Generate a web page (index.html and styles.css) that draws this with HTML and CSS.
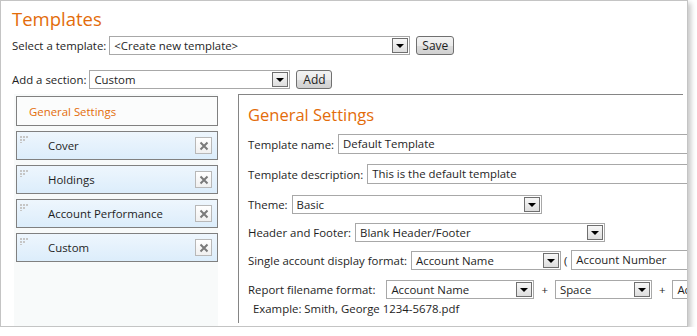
FILE: index.html
```html
<!DOCTYPE html>
<html lang="en">

<head>
  <meta charset="UTF-8">
  <title>Templates</title>
  <link rel="stylesheet" href="styles.css">
</head>

<body>
  <div class="frame">
    <h1>Templates</h1>

    <div class="row pick-row">
      <label>Select a template:</label>
      <div class="combo combo-template"><span>&lt;Create new template&gt;</span><i class="arrow"></i></div>
      <button class="btn btn-save">Save</button>
    </div>

    <div class="row add-row">
      <label>Add a section:</label>
      <div class="combo combo-section"><span>Custom</span><i class="arrow"></i></div>
      <button class="btn btn-add">Add</button>
    </div>

    <div class="editor">
      <div class="sections">
        <div class="section active">General Settings</div>
        <div class="section">
          <svg class="grip" width="10" height="7" viewBox="0 0 10 7"><rect x="0" y="0" width="2" height="2"/><rect x="3" y="0" width="2" height="2"/><rect x="6" y="0" width="2" height="2"/><rect x="0" y="3" width="2" height="2"/><rect x="3" y="3" width="2" height="2"/><rect x="0" y="6" width="2" height="1"/></svg>
          <span class="name">Cover</span>
          <span class="remove"><svg width="10" height="10" viewBox="0 0 10 10"><path d="M1.5 1.5 L8.5 8.5 M8.5 1.5 L1.5 8.5"/></svg></span>
        </div>
        <div class="section">
          <svg class="grip" width="10" height="7" viewBox="0 0 10 7"><rect x="0" y="0" width="2" height="2"/><rect x="3" y="0" width="2" height="2"/><rect x="6" y="0" width="2" height="2"/><rect x="0" y="3" width="2" height="2"/><rect x="3" y="3" width="2" height="2"/><rect x="0" y="6" width="2" height="1"/></svg>
          <span class="name">Holdings</span>
          <span class="remove"><svg width="10" height="10" viewBox="0 0 10 10"><path d="M1.5 1.5 L8.5 8.5 M8.5 1.5 L1.5 8.5"/></svg></span>
        </div>
        <div class="section">
          <svg class="grip" width="10" height="7" viewBox="0 0 10 7"><rect x="0" y="0" width="2" height="2"/><rect x="3" y="0" width="2" height="2"/><rect x="6" y="0" width="2" height="2"/><rect x="0" y="3" width="2" height="2"/><rect x="3" y="3" width="2" height="2"/><rect x="0" y="6" width="2" height="1"/></svg>
          <span class="name">Account Performance</span>
          <span class="remove"><svg width="10" height="10" viewBox="0 0 10 10"><path d="M1.5 1.5 L8.5 8.5 M8.5 1.5 L1.5 8.5"/></svg></span>
        </div>
        <div class="section">
          <svg class="grip" width="10" height="7" viewBox="0 0 10 7"><rect x="0" y="0" width="2" height="2"/><rect x="3" y="0" width="2" height="2"/><rect x="6" y="0" width="2" height="2"/><rect x="0" y="3" width="2" height="2"/><rect x="3" y="3" width="2" height="2"/><rect x="0" y="6" width="2" height="1"/></svg>
          <span class="name">Custom</span>
          <span class="remove"><svg width="10" height="10" viewBox="0 0 10 10"><path d="M1.5 1.5 L8.5 8.5 M8.5 1.5 L1.5 8.5"/></svg></span>
        </div>
      </div>

      <div class="settings">
        <h2>General Settings</h2>

        <div class="field gap10">
          <label>Template name:</label>
          <div class="text text-wide">Default Template</div>
        </div>

        <div class="field gap10">
          <label>Template description:</label>
          <div class="text text-wide">This is the default template</div>
        </div>

        <div class="field gap8">
          <label>Theme:</label>
          <div class="combo combo-250"><span>Basic</span><i class="arrow"></i></div>
        </div>

        <div class="field gap8">
          <label>Header and Footer:</label>
          <div class="combo combo-250"><span>Blank Header/Footer</span><i class="arrow"></i></div>
        </div>

        <div class="field gap9">
          <label>Single account display format:</label>
          <div class="combo combo-150"><span>Account Name</span><i class="arrow"></i></div>
          <span class="sep paren">(</span>
          <div class="text text-wide">Account Number</div>
        </div>

        <div class="field gap2">
          <label class="wide-label">Report filename format:</label>
          <div class="combo combo-148"><span>Account Name</span><i class="arrow"></i></div>
          <span class="sep">+</span>
          <div class="combo combo-97"><span>Space</span><i class="arrow"></i></div>
          <span class="sep">+</span>
          <div class="combo combo-150"><span>Account Number</span><i class="arrow"></i></div>
        </div>

        <div class="example">Example: Smith, George 1234-5678.pdf</div>
      </div>
    </div>
  </div>
</body>

</html>
```

FILE: styles.css
```css
body {
  margin: 0;
  background: #fff;
  font-family: "Open Sans", "Noto Sans", sans-serif;
  font-size: 11.4px;
  color: #1e1e1e;
}

.frame {
  width: 688px;
  height: 327px;
  box-sizing: border-box;
  border: 1px solid #c4c4c4;
  box-shadow: 3px 3px 5px rgba(0, 0, 0, 0.22);
  padding: 6px 0 0 11px;
  overflow: hidden;
}

h1 {
  margin: 0;
  font-size: 18.5px;
  line-height: 24px;
  font-weight: normal;
  color: #e36c0a;
}

.row {
  display: flex;
  align-items: center;
  height: 19px;
}

.pick-row {
  margin-top: 5px;
}

.add-row {
  margin-top: 15px;
}

.row label {
  margin-right: 3px;
}

.combo {
  display: flex;
  align-items: center;
  justify-content: space-between;
  flex-shrink: 0;
  box-sizing: border-box;
  height: 19px;
  padding: 0 1px 0 4px;
  border: 1px solid #a8a8a8;
  background: #fff;
  white-space: nowrap;
}

.combo-template {
  width: 301px;
}

.combo-section {
  width: 201px;
}

.combo-250 {
  width: 250px;
}

.combo-150 {
  width: 150px;
}

.combo-148 {
  width: 148px;
}

.combo-97 {
  width: 97px;
}

.arrow {
  display: flex;
  align-items: center;
  justify-content: center;
  box-sizing: border-box;
  width: 16px;
  height: 15px;
  border: 1px solid #6f6f6f;
  background: linear-gradient(#f7f7f7, #dedede);
}

.arrow::after {
  content: "";
  border-left: 4px solid transparent;
  border-right: 4px solid transparent;
  border-top: 4px solid #000;
  margin-top: 1px;
}

.btn {
  box-sizing: border-box;
  height: 19px;
  padding: 0;
  border: 1px solid #707070;
  border-radius: 3px;
  background: linear-gradient(#f3f3f3 0%, #ebebeb 50%, #dddddd 51%, #d0d0d0 100%);
  font-family: inherit;
  font-size: 12px;
  color: #1e1e1e;
}

.btn-save {
  width: 38px;
  margin-left: 6px;
  margin-top: -1px;
}

.btn-add {
  width: 36px;
  margin-left: 6px;
}

.editor {
  display: flex;
  margin-top: 5px;
  height: 232px;
}

.sections {
  width: 204px;
  margin-left: 2px;
  padding: 2px 0 0 2px;
  box-sizing: border-box;
  background: #f8fafa;
}

.section {
  display: flex;
  align-items: center;
  box-sizing: border-box;
  height: 29px;
  margin-bottom: 5px;
  padding: 0 5px 0 3px;
  border: 1px solid #808080;
  background: linear-gradient(#eef6fd, #dcedfb);
}

.section.active {
  height: 30px;
  padding-left: 12px;
  background: #fbfcfc;
  color: #e36c0a;
}

.grip {
  align-self: flex-start;
  margin-top: 4px;
  fill: #c6c6c6;
}

.name {
  flex: 1;
  margin-left: 18px;
}

.remove {
  display: flex;
  align-items: center;
  justify-content: center;
  box-sizing: border-box;
  width: 17px;
  height: 17px;
  border: 1px solid #b8b8b8;
  background: linear-gradient(#ffffff, #f0f0f0);
}

.remove svg {
  stroke: #7a7a7a;
  stroke-width: 2;
  fill: none;
}

.settings {
  width: 445px;
  margin-left: 20px;
  margin-bottom: 3px;
  box-sizing: border-box;
  border-left: 1px solid #858585;
  border-top: 1px solid #858585;
  padding: 0 0 0 9px;
  background: #fff;
}

h2 {
  margin: 9px 0 8px;
  font-size: 16.5px;
  line-height: 22px;
  font-weight: normal;
  color: #e36c0a;
}

.field {
  display: flex;
  align-items: center;
  height: 20px;
  white-space: nowrap;
}

.field label {
  margin-right: 4px;
}

.field .combo {
  height: 19px;
}

.gap10 {
  margin-bottom: 10px;
}

.gap9 {
  margin-bottom: 9px;
}

.gap8 {
  margin-bottom: 8px;
}

.gap2 {
  margin-bottom: 2px;
}

.wide-label {
  margin-right: 11px !important;
}

.text {
  flex-shrink: 0;
  box-sizing: border-box;
  height: 20px;
  line-height: 18px;
  padding: 0 4px;
  border: 1px solid #a8a8a8;
  background: #fff;
}

.text-wide {
  width: 400px;
}

.sep {
  margin: 0 7px;
}

.sep.paren {
  margin: 0 4px 0 3px;
}

.example {
  padding-left: 5px;
  line-height: 16px;
}
```
